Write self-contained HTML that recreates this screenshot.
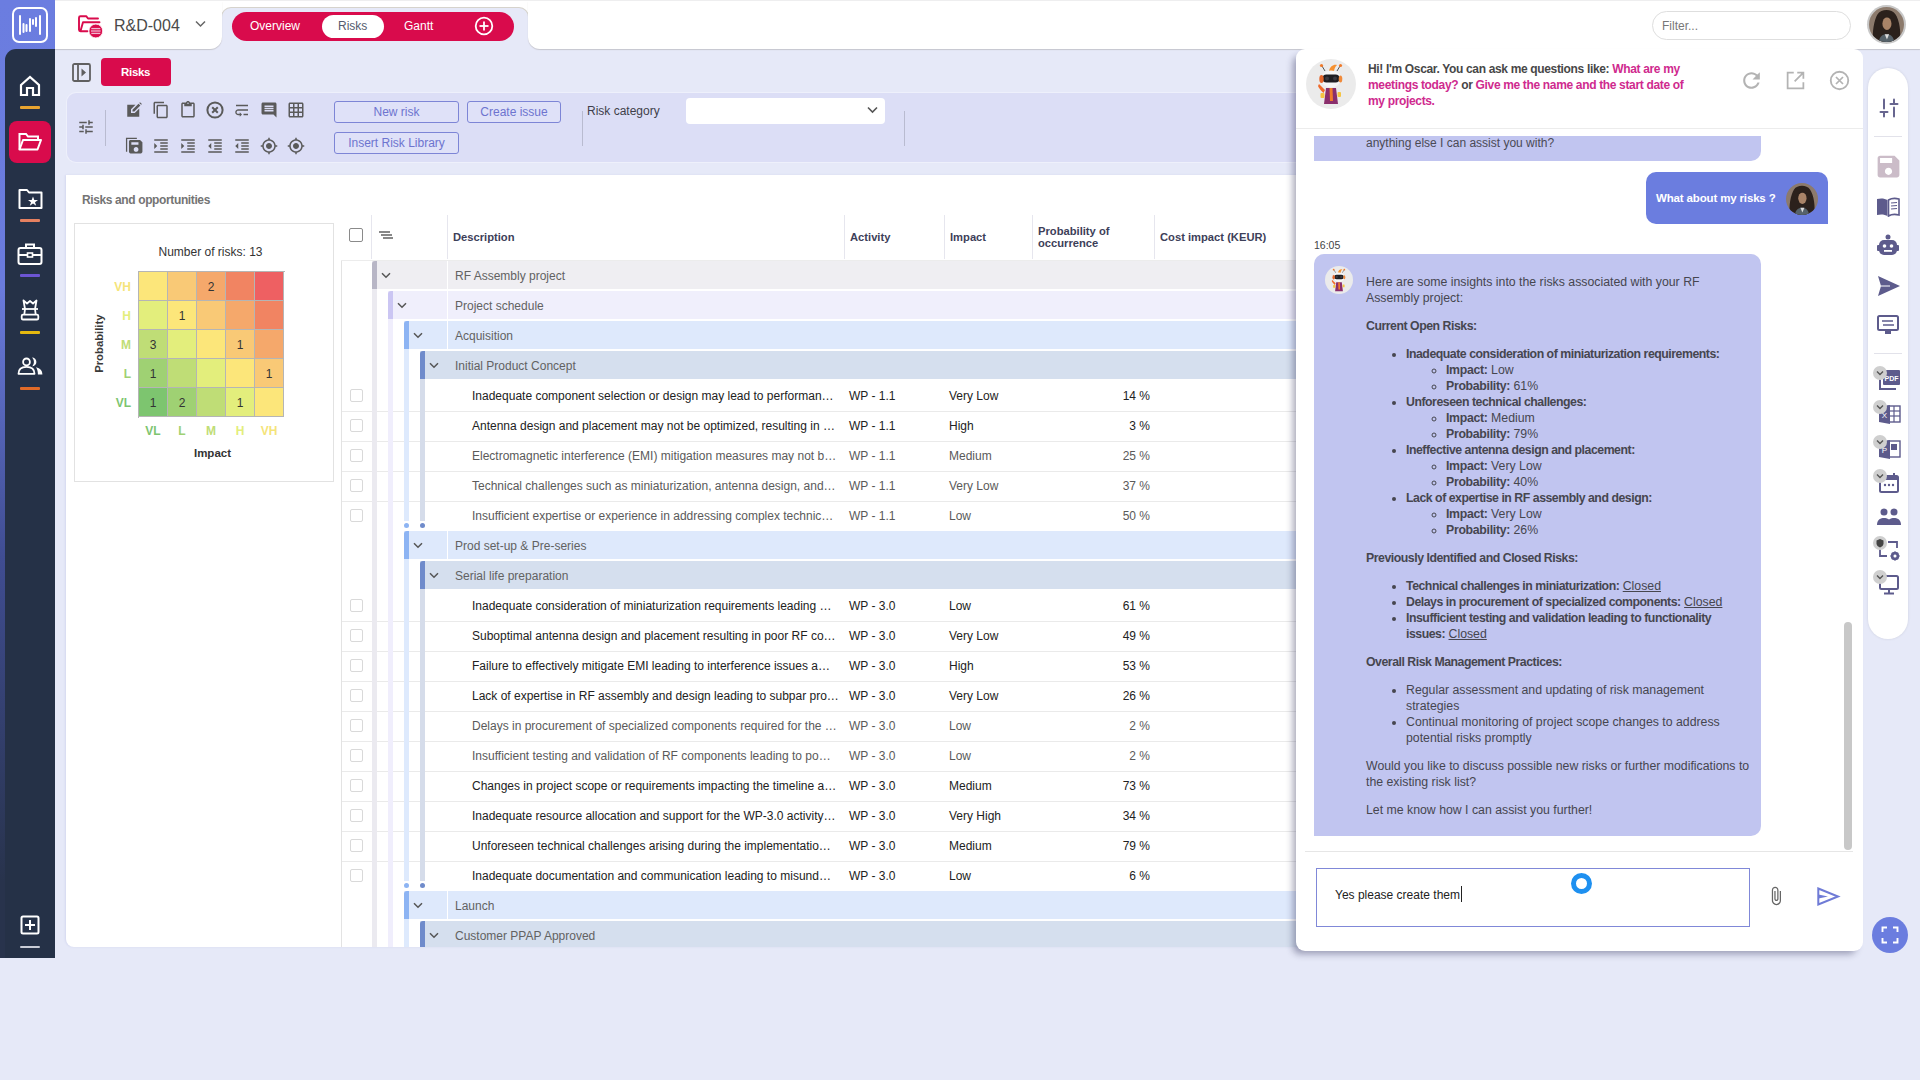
<!DOCTYPE html><html><head><meta charset="utf-8"><title>Risks</title><style>
*{box-sizing:border-box;margin:0;padding:0}
html,body{width:1920px;height:1080px;overflow:hidden}
body{font-family:"Liberation Sans", sans-serif;background:#e6e9f8;position:relative;color:#333}
.abs{position:absolute}
.t{position:absolute;white-space:nowrap;line-height:1}
svg{display:block}
</style></head><body>
<div class="abs" style="left:0;top:0;width:55px;height:958px;background:linear-gradient(#6b7de0 0%,#6a7bdc 30%,#404d92 58%,#28334c 92%)"></div>
<div class="abs" style="left:5px;top:49px;width:50px;height:909px;background:#253147;border-top-left-radius:11px"></div>
<div class="abs" style="left:12px;top:7px;width:36px;height:36px;border:2px solid #fff;border-radius:7px"></div>
<svg class="abs" style="left:12px;top:7px" width="36" height="36" viewBox="0 0 36 36"><g stroke="#fff" stroke-width="2" stroke-linecap="round">
<line x1="8" y1="9" x2="8" y2="27"/><line x1="11.5" y1="17" x2="11.5" y2="25"/><line x1="14.5" y1="18" x2="14.5" y2="24"/><line x1="18" y1="12" x2="18" y2="24"/><line x1="21" y1="13" x2="21" y2="17"/><line x1="24" y1="11" x2="24" y2="19"/><line x1="28" y1="9" x2="28" y2="27"/></g></svg>
<svg class="abs" style="left:18px;top:74px" width="24" height="24" viewBox="0 0 24 24"><path d="M3 11 L12 3 L21 11 V21 H15 V14 H9 V21 H3 Z" fill="none" stroke="#fff" stroke-width="2.2" stroke-linejoin="miter"/></svg>
<div class="abs" style="left:20px;top:106px;width:20px;height:3px;background:#e8a430;border-radius:1px"></div>
<div class="abs" style="left:9px;top:121px;width:42px;height:42px;background:#d90b4c;border-radius:8px"></div>
<svg class="abs" style="left:18px;top:132px" width="24" height="20" viewBox="0 0 24 20"><path d="M1.5 17.5 V2 H8 L10 4.5 H20 V7.5" fill="none" stroke="#fff" stroke-width="2"/><path d="M1.5 17.5 L5 8 H23 L19.5 17.5 Z" fill="none" stroke="#fff" stroke-width="2" stroke-linejoin="round"/></svg>
<svg class="abs" style="left:18px;top:188px" width="25" height="22" viewBox="0 0 25 22"><path d="M1.5 20 V2 H9 L11 4.5 H23.5 V20 Z" fill="none" stroke="#fff" stroke-width="2" stroke-linejoin="round"/><path d="M15 8.5 L16.3 12 H20 L17 14.2 L18.2 17.8 L15 15.6 L11.8 17.8 L13 14.2 L10 12 H13.7 Z" fill="#fff"/></svg>
<div class="abs" style="left:20px;top:219px;width:20px;height:3px;background:#e58060;border-radius:1px"></div>
<svg class="abs" style="left:17px;top:242px" width="26" height="24" viewBox="0 0 26 24"><rect x="1.5" y="6" width="23" height="16" rx="2" fill="none" stroke="#fff" stroke-width="2"/><path d="M9 6 V2.5 H17 V6" fill="none" stroke="#fff" stroke-width="2"/><line x1="1.5" y1="13" x2="24.5" y2="13" stroke="#fff" stroke-width="2"/><rect x="10.5" y="11" width="5" height="4" fill="#253147" stroke="#fff" stroke-width="1.6"/></svg>
<div class="abs" style="left:20px;top:274px;width:20px;height:3px;background:#6c55d4;border-radius:1px"></div>
<svg class="abs" style="left:14px;top:290px" width="32" height="90" viewBox="14 290 32 90"><g fill="none" stroke="#fff" stroke-width="1.8" stroke-linejoin="round">
<path d="M25 309 L23.5 300.5 L27 303.5 L30 301 L33 303.5 L36.5 300.5 L35 309"/>
<line x1="22" y1="309" x2="38" y2="309"/>
<path d="M25 309 L24.3 314.5 M35 309 L35.7 314.5"/>
<rect x="21.7" y="314.7" width="16.6" height="4.8" rx="1.3"/>
<circle cx="26.5" cy="361.9" r="3.4"/>
<path d="M18.5 373.8 C18.5 368.8 22 366.9 26.5 366.9 C31 366.9 34.5 368.8 34.5 373.8 Z"/></g>
<path d="M32 357.5 A4.4 4.4 0 0 1 32 366.3 C33.3 365 33.9 363.4 33.9 361.9 C33.9 360.4 33.3 358.8 32 357.5 Z" fill="#fff"/>
<path d="M36 367.3 C40.2 368.2 42.4 370.6 42.4 374.6 H37.9 C37.9 371.4 37.3 369.2 36 367.3 Z" fill="#fff"/>
</svg>
<div class="abs" style="left:20px;top:331px;width:20px;height:3px;background:#e5b80f;border-radius:1px"></div>
<div class="abs" style="left:20px;top:386.5px;width:20px;height:3px;background:#e06a28;border-radius:1px"></div>
<svg class="abs" style="left:20px;top:915px" width="20" height="20" viewBox="0 0 20 20"><rect x="1.5" y="1.5" width="17" height="17" rx="1.5" fill="none" stroke="#fff" stroke-width="2"/><line x1="10" y1="5" x2="10" y2="15" stroke="#fff" stroke-width="2"/><line x1="5" y1="10" x2="15" y2="10" stroke="#fff" stroke-width="2"/></svg>
<div class="abs" style="left:20px;top:946px;width:20px;height:2px;background:#c9ccd6;border-radius:1px"></div>
<div class="abs" style="left:55px;top:0;width:1865px;height:2px;background:#eeeeef"></div>
<div class="abs" style="left:215px;top:1px;width:320px;height:25px;background:#fff"></div>
<div class="abs" style="left:221px;top:7px;width:308px;height:43px;background:#e6e9f8;border-top-left-radius:10px;border-top-right-radius:10px;border:1px solid #d6d3cc;border-bottom:none"></div>
<div class="abs" style="left:215px;top:39px;width:320px;height:11px;background:#e6e9f8"></div>
<div class="abs" style="left:55px;top:1px;width:167px;height:48px;background:#fff;border-bottom-right-radius:12px;box-shadow:0 1px 1px rgba(70,60,40,.2)"></div>
<div class="abs" style="left:528px;top:1px;width:1392px;height:48px;background:#fff;border-bottom-left-radius:12px;box-shadow:0 1px 1px rgba(70,60,40,.2)"></div>
<svg class="abs" style="left:72px;top:8px" width="36" height="34" viewBox="0 0 36 34"><g fill="none" stroke="#d90b4c" stroke-width="1.9" stroke-linejoin="round" stroke-linecap="round"><path d="M15.5 23.2 H8.5 Q7 23.2 7 21.7 V9.7 Q7 8.2 8.5 8.2 H14.2 L16 10.5 H26"/><path d="M8.5 23 L11 14.3 H27.5"/></g><circle cx="23.8" cy="23" r="6.9" fill="#d90b4c" stroke="#fff" stroke-width="0.8"/><g stroke="#f2b6cf" stroke-width="1.3"><line x1="19.3" y1="20.6" x2="28.3" y2="20.6"/><line x1="19" y1="23" x2="28.6" y2="23"/><line x1="19.3" y1="25.4" x2="28.3" y2="25.4"/></g></svg>
<div class="t" style="left:114px;top:18px;font-size:16px;color:#4a4a4a">R&amp;D-004</div>
<svg class="abs" style="left:195px;top:20px" width="11" height="8" viewBox="0 0 11 8"><path d="M1 1.5 L5.5 6 L10 1.5" fill="none" stroke="#666" stroke-width="1.5"/></svg>
<div class="abs" style="left:232px;top:12px;width:282px;height:29px;background:#d90b4c;border-radius:15px"></div>
<div class="abs" style="left:322px;top:15px;width:62px;height:23px;background:#fff;border-radius:12px"></div>
<div class="t" style="left:250px;top:20px;font-size:12px;color:#fff">Overview</div>
<div class="t" style="left:338px;top:20px;font-size:12px;color:#555b6e">Risks</div>
<div class="t" style="left:404px;top:20px;font-size:12px;color:#fff">Gantt</div>
<svg class="abs" style="left:474px;top:16px" width="20" height="20" viewBox="0 0 20 20"><circle cx="10" cy="10" r="8.3" fill="none" stroke="#fff" stroke-width="1.8"/><line x1="10" y1="5.5" x2="10" y2="14.5" stroke="#fff" stroke-width="1.8"/><line x1="5.5" y1="10" x2="14.5" y2="10" stroke="#fff" stroke-width="1.8"/></svg>
<div class="abs" style="left:1652px;top:11px;width:199px;height:29px;border:1.5px solid #dedede;border-radius:15px;background:#fff"></div>
<div class="t" style="left:1662px;top:20px;font-size:12px;color:#777">Filter...</div>
<div class="abs" style="left:1867px;top:5px;width:39px;height:39px;border-radius:50%;background:#c8c8c8"></div>
<svg class="abs" style="left:1869.0px;top:7.0px" width="35.0" height="35.0" viewBox="0 0 40 40"><defs><clipPath id="cp188624"><circle cx="20" cy="20" r="20"/></clipPath></defs><g clip-path="url(#cp188624)"><rect width="40" height="40" fill="#8c7a6c"/>
<path d="M5 40 C3 30 6 14 10 8 C14 2 26 2 30 8 C35 15 37 30 35 40 Z" fill="#2b211c"/>
<ellipse cx="20.5" cy="19" rx="5.2" ry="7.2" fill="#a98468"/>
<path d="M14 14 C15 9 25 9 27 14 C24 11 17 11 14 14 Z" fill="#2b211c"/>
<path d="M11 40 C12 34 15 31 20 31 C25 31 28 34 29 40 Z" fill="#56626a"/>
<path d="M18 31 L20.5 37 L23 31 Z" fill="#dcdcdc"/></g></svg>
<svg class="abs" style="left:72px;top:63px" width="19" height="19" viewBox="0 0 19 19"><rect x="1" y="1" width="17" height="17" rx="1.5" fill="none" stroke="#606060" stroke-width="1.8"/><line x1="6" y1="1" x2="6" y2="18" stroke="#606060" stroke-width="1.8"/><path d="M9.5 5.5 L14 9.5 L9.5 13.5 Z" fill="#606060"/></svg>
<div class="abs" style="left:101px;top:58px;width:70px;height:28px;background:#d90b4c;border-radius:4px"></div>
<div class="t" style="left:121px;top:67px;font-size:11.5px;font-weight:bold;letter-spacing:-0.3px;color:#fff">Risks</div>
<div class="abs" style="left:67px;top:92.5px;width:1240px;height:69px;background:#dcdef6;border-radius:9px;box-shadow:0 0 0 1px #eef0fb"></div>
<svg class="abs" style="left:77.0px;top:118.0px" width="18" height="18" viewBox="0 0 24 24"><path d="M3 17v2h6v-2H3zM3 5v2h10V5H3zm10 16v-2h8v-2h-8v-2h-2v6h2zM7 9v2H3v2h4v2h2V9H7zm14 4v-2H11v2h10zm-6-4h2V7h4V5h-4V3h-2v6z" fill="#5a5a5a"/></svg>
<div class="abs" style="left:105px;top:110px;width:1px;height:36px;background:#b9bbd0"></div>
<svg class="abs" style="left:125.4px;top:101.0px" width="18" height="18" viewBox="0 0 24 24"><path d="M3 5h11l-6 6v5h5l6-6v11H3z M10 14v-2.5l8-8 2.5 2.5-8 8z M19 2.5l1-1 2.5 2.5-1 1z" fill="#5a5a5a"/></svg>
<svg class="abs" style="left:151.6px;top:101.0px" width="18" height="18" viewBox="0 0 24 24"><path d="M16 1H4c-1.1 0-2 .9-2 2v14h2V3h12V1zm3 4H8c-1.1 0-2 .9-2 2v14c0 1.1.9 2 2 2h11c1.1 0 2-.9 2-2V7c0-1.1-.9-2-2-2zm0 16H8V7h11v14z" fill="#5a5a5a"/></svg>
<svg class="abs" style="left:179.0px;top:101.0px" width="18" height="18" viewBox="0 0 24 24"><path d="M19 2h-4.18C14.4.84 13.3 0 12 0c-1.3 0-2.4.84-2.82 2H5c-1.1 0-2 .9-2 2v16c0 1.1.9 2 2 2h14c1.1 0 2-.9 2-2V4c0-1.1-.9-2-2-2zm-7 0c.55 0 1 .45 1 1s-.45 1-1 1-1-.45-1-1 .45-1 1-1zm7 18H5V4h2v3h10V4h2v16z" fill="#5a5a5a"/></svg>
<svg class="abs" style="left:205.9px;top:101px" width="18" height="18" viewBox="0 0 18 18"><circle cx="9" cy="9" r="7.6" fill="none" stroke="#5a5a5a" stroke-width="2"/><path d="M6.2 6.2 L11.8 11.8 M11.8 6.2 L6.2 11.8" stroke="#5a5a5a" stroke-width="2"/></svg>
<svg class="abs" style="left:232.6px;top:101px" width="18" height="18" viewBox="0 0 24 24"><g transform="translate(24,0) scale(-1,1)"><path d="M4 19h6v-2H4v2zM20 5H4v2h16V5zm-3 6H4v2h13.25c1.1 0 2 .9 2 2s-.9 2-2 2H15v-2l-3 3 3 3v-2h2c2.21 0 4-1.79 4-4s-1.79-4-4-4z" fill="#5a5a5a"/></g></svg>
<svg class="abs" style="left:259.8px;top:101.0px" width="18" height="18" viewBox="0 0 24 24"><path d="M21.99 4c0-1.1-.89-2-1.99-2H4c-1.1 0-2 .9-2 2v12c0 1.1.9 2 2 2h14l4 4-.01-18zM18 14H6v-2h12v2zm0-3H6V9h12v2zm0-3H6V6h12v2z" fill="#5a5a5a"/></svg>
<svg class="abs" style="left:286.8px;top:101.0px" width="18" height="18" viewBox="0 0 24 24"><path d="M20 2H4c-1.1 0-2 .9-2 2v16c0 1.1.9 2 2 2h16c1.1 0 2-.9 2-2V4c0-1.1-.9-2-2-2zM8 20H4v-4h4v4zm0-6H4v-4h4v4zm0-6H4V4h4v4zm6 12h-4v-4h4v4zm0-6h-4v-4h4v4zm0-6h-4V4h4v4zm6 12h-4v-4h4v4zm0-6h-4v-4h4v4zm0-6h-4V4h4v4z" fill="#5a5a5a"/></svg>
<svg class="abs" style="left:124.9px;top:136px" width="19" height="19" viewBox="0 0 24 24"><path d="M2 20 V3 H15" fill="none" stroke="#5a5a5a" stroke-width="1.6"/><path d="M19 5H7c-1.11 0-2 .9-2 2v13c0 1.1.89 2 2 2h13c1.1 0 2-.9 2-2V8l-3-3zm-5 15c-1.66 0-3-1.34-3-3s1.34-3 3-3 3 1.34 3 3-1.34 3-3 3zm3-9H8V8h9v3z" fill="#5a5a5a"/></svg>
<svg class="abs" style="left:151.6px;top:136.5px" width="18" height="18" viewBox="0 0 24 24"><path d="M3 21h18v-2H3v2zM3 8v8l4-4-4-4zm8 9h10v-2H11v2zM3 3v2h18V3H3zm8 6h10V7H11v2zm0 4h10v-2H11v2z" fill="#5a5a5a"/></svg>
<svg class="abs" style="left:179.0px;top:136.5px" width="18" height="18" viewBox="0 0 24 24"><path d="M3 21h18v-2H3v2zM3 8v8l4-4-4-4zm8 9h10v-2H11v2zM3 3v2h18V3H3zm8 6h10V7H11v2zm0 4h10v-2H11v2z" fill="#5a5a5a"/></svg>
<svg class="abs" style="left:205.9px;top:136.5px" width="18" height="18" viewBox="0 0 24 24"><path d="M11 17h10v-2H11v2zm-8-5l4 4V8l-4 4zm0 9h18v-2H3v2zM3 3v2h18V3H3zm8 6h10V7H11v2zm0 4h10v-2H11v2z" fill="#5a5a5a"/></svg>
<svg class="abs" style="left:232.6px;top:136.5px" width="18" height="18" viewBox="0 0 24 24"><path d="M11 17h10v-2H11v2zm-8-5l4 4V8l-4 4zm0 9h18v-2H3v2zM3 3v2h18V3H3zm8 6h10V7H11v2zm0 4h10v-2H11v2z" fill="#5a5a5a"/></svg>
<svg class="abs" style="left:259.8px;top:136.5px" width="18" height="18" viewBox="0 0 24 24"><path d="M12 8c-2.21 0-4 1.79-4 4s1.79 4 4 4 4-1.79 4-4-1.79-4-4-4zm8.94 3c-.46-4.17-3.77-7.48-7.94-7.94V1h-2v2.06C6.83 3.52 3.52 6.83 3.06 11H1v2h2.06c.46 4.17 3.77 7.48 7.94 7.94V23h2v-2.06c4.17-.46 7.48-3.77 7.94-7.94H23v-2h-2.06zM12 19c-3.87 0-7-3.13-7-7s3.13-7 7-7 7 3.13 7 7-3.13 7-7 7z" fill="#5a5a5a"/></svg>
<svg class="abs" style="left:286.8px;top:136.5px" width="18" height="18" viewBox="0 0 24 24"><path d="M12 8c-2.21 0-4 1.79-4 4s1.79 4 4 4 4-1.79 4-4-1.79-4-4-4zm8.94 3c-.46-4.17-3.77-7.48-7.94-7.94V1h-2v2.06C6.83 3.52 3.52 6.83 3.06 11H1v2h2.06c.46 4.17 3.77 7.48 7.94 7.94V23h2v-2.06c4.17-.46 7.48-3.77 7.94-7.94H23v-2h-2.06zM12 19c-3.87 0-7-3.13-7-7s3.13-7 7-7 7 3.13 7 7-3.13 7-7 7z" fill="#5a5a5a"/></svg>
<div class="abs" style="left:334px;top:101px;width:125px;height:22px;border:1.3px solid #7d85d6;border-radius:3px;background:#dfe1f8"></div>
<div class="t" style="left:334px;top:106.3px;width:125px;text-align:center;font-size:12px;color:#6d74cf">New risk</div>
<div class="abs" style="left:467px;top:101px;width:94px;height:22px;border:1.3px solid #7d85d6;border-radius:3px;background:#dfe1f8"></div>
<div class="t" style="left:467px;top:106.3px;width:94px;text-align:center;font-size:12px;color:#6d74cf">Create issue</div>
<div class="abs" style="left:334px;top:132px;width:125px;height:22px;border:1.3px solid #7d85d6;border-radius:3px;background:#dfe1f8"></div>
<div class="t" style="left:334px;top:137.3px;width:125px;text-align:center;font-size:12px;color:#6d74cf">Insert Risk Library</div>
<div class="abs" style="left:582px;top:111px;width:1px;height:35px;background:#b9bbd0"></div>
<div class="t" style="left:587px;top:105px;font-size:12px;color:#3f3f4a">Risk category</div>
<div class="abs" style="left:686px;top:98px;width:199px;height:26px;background:#fff;border-radius:4px"></div>
<svg class="abs" style="left:867px;top:106px" width="11" height="8" viewBox="0 0 11 8"><path d="M1 1.5 L5.5 6 L10 1.5" fill="none" stroke="#555" stroke-width="1.6"/></svg>
<div class="abs" style="left:904px;top:111px;width:1px;height:35px;background:#b9bbd0"></div>
<div class="abs" style="left:66px;top:174.5px;width:1300px;height:772.5px;background:#fff;border-radius:0 0 0 8px;box-shadow:-1px 0 2px rgba(120,130,200,.15)"></div>
<div class="t" style="left:82px;top:194px;font-size:12px;font-weight:bold;letter-spacing:-0.38px;color:#747474">Risks and opportunities</div>
<div class="abs" style="left:74px;top:223px;width:260px;height:259px;border:1px solid #e2e2e2"></div>
<div class="t" style="left:74px;top:246px;width:273px;text-align:center;font-size:12px;color:#333">Number of risks: 13</div>
<div class="abs" style="left:138.5px;top:271.5px;width:29px;height:29px;background:#fce67a;border-right:1px solid #b5b5b5;border-bottom:1px solid #b5b5b5"></div>
<div class="abs" style="left:167.5px;top:271.5px;width:29px;height:29px;background:#f9c976;border-right:1px solid #b5b5b5;border-bottom:1px solid #b5b5b5"></div>
<div class="abs" style="left:196.5px;top:271.5px;width:29px;height:29px;background:#f5a86b;border-right:1px solid #b5b5b5;border-bottom:1px solid #b5b5b5"></div>
<div class="t" style="left:196.5px;top:280.5px;width:29px;text-align:center;font-size:12px;color:#333">2</div>
<div class="abs" style="left:225.5px;top:271.5px;width:29px;height:29px;background:#f18462;border-right:1px solid #b5b5b5;border-bottom:1px solid #b5b5b5"></div>
<div class="abs" style="left:254.5px;top:271.5px;width:29px;height:29px;background:#ee6062;border-right:1px solid #b5b5b5;border-bottom:1px solid #b5b5b5"></div>
<div class="abs" style="left:138.5px;top:300.5px;width:29px;height:29px;background:#e3ee7c;border-right:1px solid #b5b5b5;border-bottom:1px solid #b5b5b5"></div>
<div class="abs" style="left:167.5px;top:300.5px;width:29px;height:29px;background:#fce67a;border-right:1px solid #b5b5b5;border-bottom:1px solid #b5b5b5"></div>
<div class="t" style="left:167.5px;top:309.5px;width:29px;text-align:center;font-size:12px;color:#333">1</div>
<div class="abs" style="left:196.5px;top:300.5px;width:29px;height:29px;background:#f9c976;border-right:1px solid #b5b5b5;border-bottom:1px solid #b5b5b5"></div>
<div class="abs" style="left:225.5px;top:300.5px;width:29px;height:29px;background:#f5a86b;border-right:1px solid #b5b5b5;border-bottom:1px solid #b5b5b5"></div>
<div class="abs" style="left:254.5px;top:300.5px;width:29px;height:29px;background:#f18462;border-right:1px solid #b5b5b5;border-bottom:1px solid #b5b5b5"></div>
<div class="abs" style="left:138.5px;top:329.5px;width:29px;height:29px;background:#bfdd76;border-right:1px solid #b5b5b5;border-bottom:1px solid #b5b5b5"></div>
<div class="t" style="left:138.5px;top:338.5px;width:29px;text-align:center;font-size:12px;color:#333">3</div>
<div class="abs" style="left:167.5px;top:329.5px;width:29px;height:29px;background:#e3ee7c;border-right:1px solid #b5b5b5;border-bottom:1px solid #b5b5b5"></div>
<div class="abs" style="left:196.5px;top:329.5px;width:29px;height:29px;background:#fce67a;border-right:1px solid #b5b5b5;border-bottom:1px solid #b5b5b5"></div>
<div class="abs" style="left:225.5px;top:329.5px;width:29px;height:29px;background:#f9c976;border-right:1px solid #b5b5b5;border-bottom:1px solid #b5b5b5"></div>
<div class="t" style="left:225.5px;top:338.5px;width:29px;text-align:center;font-size:12px;color:#333">1</div>
<div class="abs" style="left:254.5px;top:329.5px;width:29px;height:29px;background:#f5a86b;border-right:1px solid #b5b5b5;border-bottom:1px solid #b5b5b5"></div>
<div class="abs" style="left:138.5px;top:358.5px;width:29px;height:29px;background:#9fd173;border-right:1px solid #b5b5b5;border-bottom:1px solid #b5b5b5"></div>
<div class="t" style="left:138.5px;top:367.5px;width:29px;text-align:center;font-size:12px;color:#333">1</div>
<div class="abs" style="left:167.5px;top:358.5px;width:29px;height:29px;background:#bfdd76;border-right:1px solid #b5b5b5;border-bottom:1px solid #b5b5b5"></div>
<div class="abs" style="left:196.5px;top:358.5px;width:29px;height:29px;background:#e3ee7c;border-right:1px solid #b5b5b5;border-bottom:1px solid #b5b5b5"></div>
<div class="abs" style="left:225.5px;top:358.5px;width:29px;height:29px;background:#fce67a;border-right:1px solid #b5b5b5;border-bottom:1px solid #b5b5b5"></div>
<div class="abs" style="left:254.5px;top:358.5px;width:29px;height:29px;background:#f9c976;border-right:1px solid #b5b5b5;border-bottom:1px solid #b5b5b5"></div>
<div class="t" style="left:254.5px;top:367.5px;width:29px;text-align:center;font-size:12px;color:#333">1</div>
<div class="abs" style="left:138.5px;top:387.5px;width:29px;height:29px;background:#7dc56f;border-right:1px solid #b5b5b5;border-bottom:1px solid #b5b5b5"></div>
<div class="t" style="left:138.5px;top:396.5px;width:29px;text-align:center;font-size:12px;color:#333">1</div>
<div class="abs" style="left:167.5px;top:387.5px;width:29px;height:29px;background:#9fd173;border-right:1px solid #b5b5b5;border-bottom:1px solid #b5b5b5"></div>
<div class="t" style="left:167.5px;top:396.5px;width:29px;text-align:center;font-size:12px;color:#333">2</div>
<div class="abs" style="left:196.5px;top:387.5px;width:29px;height:29px;background:#bfdd76;border-right:1px solid #b5b5b5;border-bottom:1px solid #b5b5b5"></div>
<div class="abs" style="left:225.5px;top:387.5px;width:29px;height:29px;background:#e3ee7c;border-right:1px solid #b5b5b5;border-bottom:1px solid #b5b5b5"></div>
<div class="t" style="left:225.5px;top:396.5px;width:29px;text-align:center;font-size:12px;color:#333">1</div>
<div class="abs" style="left:254.5px;top:387.5px;width:29px;height:29px;background:#fce67a;border-right:1px solid #b5b5b5;border-bottom:1px solid #b5b5b5"></div>
<div class="abs" style="left:137.5px;top:270.5px;width:147px;height:147px;border-left:1px solid #b5b5b5;border-top:1px solid #b5b5b5"></div>
<div class="t" style="left:100px;top:280.5px;width:31px;text-align:right;font-size:12px;font-weight:bold;color:#f5e47a">VH</div>
<div class="t" style="left:100px;top:309.5px;width:31px;text-align:right;font-size:12px;font-weight:bold;color:#e3ee7c">H</div>
<div class="t" style="left:100px;top:338.5px;width:31px;text-align:right;font-size:12px;font-weight:bold;color:#bfdd76">M</div>
<div class="t" style="left:100px;top:367.5px;width:31px;text-align:right;font-size:12px;font-weight:bold;color:#9fd173">L</div>
<div class="t" style="left:100px;top:396.5px;width:31px;text-align:right;font-size:12px;font-weight:bold;color:#7dc56f">VL</div>
<div class="t" style="left:138.5px;top:425px;width:29px;text-align:center;font-size:12px;font-weight:bold;color:#7dc56f">VL</div>
<div class="t" style="left:167.5px;top:425px;width:29px;text-align:center;font-size:12px;font-weight:bold;color:#9fd173">L</div>
<div class="t" style="left:196.5px;top:425px;width:29px;text-align:center;font-size:12px;font-weight:bold;color:#bfdd76">M</div>
<div class="t" style="left:225.5px;top:425px;width:29px;text-align:center;font-size:12px;font-weight:bold;color:#e3ee7c">H</div>
<div class="t" style="left:254.5px;top:425px;width:29px;text-align:center;font-size:12px;font-weight:bold;color:#f5e47a">VH</div>
<div class="t" style="left:140px;top:448px;width:145px;text-align:center;font-size:11.5px;font-weight:bold;color:#333">Impact</div>
<div class="t" style="left:60px;top:338px;width:80px;text-align:center;font-size:11.3px;font-weight:bold;color:#3a3a3a;transform:rotate(-90deg)">Probability</div>
<div class="abs" style="left:341px;top:260px;width:1px;height:687px;background:#e3e3e3"></div>
<div class="abs" style="left:341px;top:260px;width:1000px;height:1px;background:#ececec"></div>
<div class="abs" style="left:371px;top:215px;width:1px;height:44px;background:#e6e6ee"></div>
<div class="abs" style="left:447px;top:215px;width:1px;height:44px;background:#e6e6ee"></div>
<div class="abs" style="left:844px;top:215px;width:1px;height:44px;background:#e6e6ee"></div>
<div class="abs" style="left:944px;top:215px;width:1px;height:44px;background:#e6e6ee"></div>
<div class="abs" style="left:1032px;top:215px;width:1px;height:44px;background:#e6e6ee"></div>
<div class="abs" style="left:1154px;top:215px;width:1px;height:44px;background:#e6e6ee"></div>
<div class="abs" style="left:349px;top:228px;width:14px;height:14px;border:1.5px solid #8a8a8a;border-radius:2px"></div>
<svg class="abs" style="left:378px;top:230px" width="16" height="12" viewBox="0 0 16 12"><g stroke="#555" stroke-width="1.4"><line x1="1" y1="2" x2="12" y2="2"/><line x1="3" y1="5" x2="14" y2="5"/><line x1="5" y1="8" x2="15" y2="8"/></g></svg>
<div class="t" style="left:453px;top:232px;font-size:11.2px;font-weight:bold;color:#3d4059">Description</div>
<div class="t" style="left:850px;top:232px;font-size:11.2px;font-weight:bold;color:#3d4059">Activity</div>
<div class="t" style="left:950px;top:232px;font-size:11.2px;font-weight:bold;color:#3d4059">Impact</div>
<div class="t" style="left:1160px;top:232px;font-size:11.2px;font-weight:bold;color:#3d4059">Cost impact (KEUR)</div>
<div class="t" style="left:1038px;top:225px;font-size:11.2px;font-weight:bold;color:#3d4059;line-height:12px;white-space:normal;width:110px">Probability of<br>occurrence</div>
<div class="abs" style="left:0;top:0;width:1920px;height:947px;overflow:hidden;pointer-events:none"><div class="abs" style="left:342px;top:410.5px;width:1000px;height:1px;background:#eaeaea"></div><div class="abs" style="left:342px;top:440.5px;width:1000px;height:1px;background:#eaeaea"></div><div class="abs" style="left:342px;top:470.5px;width:1000px;height:1px;background:#eaeaea"></div><div class="abs" style="left:342px;top:500.5px;width:1000px;height:1px;background:#eaeaea"></div><div class="abs" style="left:342px;top:620.5px;width:1000px;height:1px;background:#eaeaea"></div><div class="abs" style="left:342px;top:650.5px;width:1000px;height:1px;background:#eaeaea"></div><div class="abs" style="left:342px;top:680.5px;width:1000px;height:1px;background:#eaeaea"></div><div class="abs" style="left:342px;top:710.5px;width:1000px;height:1px;background:#eaeaea"></div><div class="abs" style="left:342px;top:740.5px;width:1000px;height:1px;background:#eaeaea"></div><div class="abs" style="left:342px;top:770.5px;width:1000px;height:1px;background:#eaeaea"></div><div class="abs" style="left:342px;top:800.5px;width:1000px;height:1px;background:#eaeaea"></div><div class="abs" style="left:342px;top:830.5px;width:1000px;height:1px;background:#eaeaea"></div><div class="abs" style="left:342px;top:860.5px;width:1000px;height:1px;background:#eaeaea"></div><div class="abs" style="left:372px;top:288px;width:5px;height:659px;background:#ebeaf0"></div><div class="abs" style="left:388px;top:318px;width:5px;height:629px;background:#f0eefc"></div><div class="abs" style="left:404px;top:348px;width:5px;height:173px;background:#deeafd"></div><div class="abs" style="left:404px;top:523px;width:5px;height:5px;border-radius:50%;background:#8db4f3"></div><div class="abs" style="left:420px;top:378px;width:5px;height:143px;background:#d5dcea"></div><div class="abs" style="left:420px;top:523px;width:5px;height:5px;border-radius:50%;background:#6f8bcb"></div><div class="abs" style="left:404px;top:558px;width:5px;height:323px;background:#deeafd"></div><div class="abs" style="left:404px;top:883px;width:5px;height:5px;border-radius:50%;background:#8db4f3"></div><div class="abs" style="left:420px;top:588px;width:5px;height:293px;background:#d5dcea"></div><div class="abs" style="left:420px;top:883px;width:5px;height:5px;border-radius:50%;background:#6f8bcb"></div><div class="abs" style="left:404px;top:918px;width:5px;height:29px;background:#deeafd"></div><div class="abs" style="left:420px;top:948px;width:5px;height:-1px;background:#d5dcea"></div><div class="abs" style="left:372px;top:260.6px;width:1000px;height:28.3px;background:#efeef2"></div><div class="abs" style="left:372px;top:260.6px;width:5px;height:28.3px;background:#b8b6c6;border-top-left-radius:3px"></div><div class="abs" style="left:447px;top:260.6px;width:1px;height:28.3px;background:#fff"></div><svg class="abs" style="left:381px;top:272px" width="10" height="7" viewBox="0 0 10 7"><path d="M1 1.2 L5 5.2 L9 1.2" fill="none" stroke="#555" stroke-width="1.5"/></svg><div class="t" style="left:455px;top:270px;font-size:12px;color:#626262">RF Assembly project</div><div class="abs" style="left:388px;top:291.3px;width:1000px;height:27.6px;background:#f0effc"></div><div class="abs" style="left:388px;top:291.3px;width:5px;height:27.6px;background:#cbc6f3;border-top-left-radius:3px"></div><div class="abs" style="left:447px;top:291.3px;width:1px;height:27.6px;background:#fff"></div><svg class="abs" style="left:397px;top:302px" width="10" height="7" viewBox="0 0 10 7"><path d="M1 1.2 L5 5.2 L9 1.2" fill="none" stroke="#555" stroke-width="1.5"/></svg><div class="t" style="left:455px;top:300px;font-size:12px;color:#626262">Project schedule</div><div class="abs" style="left:404px;top:321.3px;width:1000px;height:27.6px;background:#dee9fc"></div><div class="abs" style="left:404px;top:321.3px;width:5px;height:27.6px;background:#8db4f3;border-top-left-radius:3px"></div><div class="abs" style="left:447px;top:321.3px;width:1px;height:27.6px;background:#fff"></div><svg class="abs" style="left:413px;top:332px" width="10" height="7" viewBox="0 0 10 7"><path d="M1 1.2 L5 5.2 L9 1.2" fill="none" stroke="#555" stroke-width="1.5"/></svg><div class="t" style="left:455px;top:330px;font-size:12px;color:#626262">Acquisition</div><div class="abs" style="left:420px;top:351.3px;width:1000px;height:27.6px;background:#d5dfee"></div><div class="abs" style="left:420px;top:351.3px;width:5px;height:27.6px;background:#6f8bcb;border-top-left-radius:3px"></div><svg class="abs" style="left:429px;top:362px" width="10" height="7" viewBox="0 0 10 7"><path d="M1 1.2 L5 5.2 L9 1.2" fill="none" stroke="#555" stroke-width="1.5"/></svg><div class="t" style="left:455px;top:360px;font-size:12px;color:#626262">Initial Product Concept</div><div class="abs" style="left:350px;top:389px;width:13px;height:13px;border:1.3px solid #d9d9d9;border-radius:2px"></div><div class="t" style="left:472px;top:390px;font-size:12px;color:#222">Inadequate component selection or design may lead to performan…</div><div class="t" style="left:849px;top:390px;font-size:12px;color:#222">WP - 1.1</div><div class="t" style="left:949px;top:390px;font-size:12px;color:#222">Very Low</div><div class="t" style="left:1050px;top:390px;width:100px;text-align:right;font-size:12px;color:#222">14 %</div><div class="abs" style="left:350px;top:419px;width:13px;height:13px;border:1.3px solid #d9d9d9;border-radius:2px"></div><div class="t" style="left:472px;top:420px;font-size:12px;color:#222">Antenna design and placement may not be optimized, resulting in …</div><div class="t" style="left:849px;top:420px;font-size:12px;color:#222">WP - 1.1</div><div class="t" style="left:949px;top:420px;font-size:12px;color:#222">High</div><div class="t" style="left:1050px;top:420px;width:100px;text-align:right;font-size:12px;color:#222">3 %</div><div class="abs" style="left:350px;top:449px;width:13px;height:13px;border:1.3px solid #d9d9d9;border-radius:2px"></div><div class="t" style="left:472px;top:450px;font-size:12px;color:#5a5a5a">Electromagnetic interference (EMI) mitigation measures may not b…</div><div class="t" style="left:849px;top:450px;font-size:12px;color:#5a5a5a">WP - 1.1</div><div class="t" style="left:949px;top:450px;font-size:12px;color:#5a5a5a">Medium</div><div class="t" style="left:1050px;top:450px;width:100px;text-align:right;font-size:12px;color:#5a5a5a">25 %</div><div class="abs" style="left:350px;top:479px;width:13px;height:13px;border:1.3px solid #d9d9d9;border-radius:2px"></div><div class="t" style="left:472px;top:480px;font-size:12px;color:#5a5a5a">Technical challenges such as miniaturization, antenna design, and…</div><div class="t" style="left:849px;top:480px;font-size:12px;color:#5a5a5a">WP - 1.1</div><div class="t" style="left:949px;top:480px;font-size:12px;color:#5a5a5a">Very Low</div><div class="t" style="left:1050px;top:480px;width:100px;text-align:right;font-size:12px;color:#5a5a5a">37 %</div><div class="abs" style="left:350px;top:509px;width:13px;height:13px;border:1.3px solid #d9d9d9;border-radius:2px"></div><div class="t" style="left:472px;top:510px;font-size:12px;color:#5a5a5a">Insufficient expertise or experience in addressing complex technic…</div><div class="t" style="left:849px;top:510px;font-size:12px;color:#5a5a5a">WP - 1.1</div><div class="t" style="left:949px;top:510px;font-size:12px;color:#5a5a5a">Low</div><div class="t" style="left:1050px;top:510px;width:100px;text-align:right;font-size:12px;color:#5a5a5a">50 %</div><div class="abs" style="left:404px;top:531.3px;width:1000px;height:27.6px;background:#dee9fc"></div><div class="abs" style="left:404px;top:531.3px;width:5px;height:27.6px;background:#8db4f3;border-top-left-radius:3px"></div><div class="abs" style="left:447px;top:531.3px;width:1px;height:27.6px;background:#fff"></div><svg class="abs" style="left:413px;top:542px" width="10" height="7" viewBox="0 0 10 7"><path d="M1 1.2 L5 5.2 L9 1.2" fill="none" stroke="#555" stroke-width="1.5"/></svg><div class="t" style="left:455px;top:540px;font-size:12px;color:#626262">Prod set-up &amp; Pre-series</div><div class="abs" style="left:420px;top:561.3px;width:1000px;height:27.6px;background:#d5dfee"></div><div class="abs" style="left:420px;top:561.3px;width:5px;height:27.6px;background:#6f8bcb;border-top-left-radius:3px"></div><svg class="abs" style="left:429px;top:572px" width="10" height="7" viewBox="0 0 10 7"><path d="M1 1.2 L5 5.2 L9 1.2" fill="none" stroke="#555" stroke-width="1.5"/></svg><div class="t" style="left:455px;top:570px;font-size:12px;color:#626262">Serial life preparation</div><div class="abs" style="left:350px;top:599px;width:13px;height:13px;border:1.3px solid #d9d9d9;border-radius:2px"></div><div class="t" style="left:472px;top:600px;font-size:12px;color:#222">Inadequate consideration of miniaturization requirements leading …</div><div class="t" style="left:849px;top:600px;font-size:12px;color:#222">WP - 3.0</div><div class="t" style="left:949px;top:600px;font-size:12px;color:#222">Low</div><div class="t" style="left:1050px;top:600px;width:100px;text-align:right;font-size:12px;color:#222">61 %</div><div class="abs" style="left:350px;top:629px;width:13px;height:13px;border:1.3px solid #d9d9d9;border-radius:2px"></div><div class="t" style="left:472px;top:630px;font-size:12px;color:#222">Suboptimal antenna design and placement resulting in poor RF co…</div><div class="t" style="left:849px;top:630px;font-size:12px;color:#222">WP - 3.0</div><div class="t" style="left:949px;top:630px;font-size:12px;color:#222">Very Low</div><div class="t" style="left:1050px;top:630px;width:100px;text-align:right;font-size:12px;color:#222">49 %</div><div class="abs" style="left:350px;top:659px;width:13px;height:13px;border:1.3px solid #d9d9d9;border-radius:2px"></div><div class="t" style="left:472px;top:660px;font-size:12px;color:#222">Failure to effectively mitigate EMI leading to interference issues a…</div><div class="t" style="left:849px;top:660px;font-size:12px;color:#222">WP - 3.0</div><div class="t" style="left:949px;top:660px;font-size:12px;color:#222">High</div><div class="t" style="left:1050px;top:660px;width:100px;text-align:right;font-size:12px;color:#222">53 %</div><div class="abs" style="left:350px;top:689px;width:13px;height:13px;border:1.3px solid #d9d9d9;border-radius:2px"></div><div class="t" style="left:472px;top:690px;font-size:12px;color:#222">Lack of expertise in RF assembly and design leading to subpar pro…</div><div class="t" style="left:849px;top:690px;font-size:12px;color:#222">WP - 3.0</div><div class="t" style="left:949px;top:690px;font-size:12px;color:#222">Very Low</div><div class="t" style="left:1050px;top:690px;width:100px;text-align:right;font-size:12px;color:#222">26 %</div><div class="abs" style="left:350px;top:719px;width:13px;height:13px;border:1.3px solid #d9d9d9;border-radius:2px"></div><div class="t" style="left:472px;top:720px;font-size:12px;color:#5a5a5a">Delays in procurement of specialized components required for the …</div><div class="t" style="left:849px;top:720px;font-size:12px;color:#5a5a5a">WP - 3.0</div><div class="t" style="left:949px;top:720px;font-size:12px;color:#5a5a5a">Low</div><div class="t" style="left:1050px;top:720px;width:100px;text-align:right;font-size:12px;color:#5a5a5a">2 %</div><div class="abs" style="left:350px;top:749px;width:13px;height:13px;border:1.3px solid #d9d9d9;border-radius:2px"></div><div class="t" style="left:472px;top:750px;font-size:12px;color:#5a5a5a">Insufficient testing and validation of RF components leading to po…</div><div class="t" style="left:849px;top:750px;font-size:12px;color:#5a5a5a">WP - 3.0</div><div class="t" style="left:949px;top:750px;font-size:12px;color:#5a5a5a">Low</div><div class="t" style="left:1050px;top:750px;width:100px;text-align:right;font-size:12px;color:#5a5a5a">2 %</div><div class="abs" style="left:350px;top:779px;width:13px;height:13px;border:1.3px solid #d9d9d9;border-radius:2px"></div><div class="t" style="left:472px;top:780px;font-size:12px;color:#222">Changes in project scope or requirements impacting the timeline a…</div><div class="t" style="left:849px;top:780px;font-size:12px;color:#222">WP - 3.0</div><div class="t" style="left:949px;top:780px;font-size:12px;color:#222">Medium</div><div class="t" style="left:1050px;top:780px;width:100px;text-align:right;font-size:12px;color:#222">73 %</div><div class="abs" style="left:350px;top:809px;width:13px;height:13px;border:1.3px solid #d9d9d9;border-radius:2px"></div><div class="t" style="left:472px;top:810px;font-size:12px;color:#222">Inadequate resource allocation and support for the WP-3.0 activity…</div><div class="t" style="left:849px;top:810px;font-size:12px;color:#222">WP - 3.0</div><div class="t" style="left:949px;top:810px;font-size:12px;color:#222">Very High</div><div class="t" style="left:1050px;top:810px;width:100px;text-align:right;font-size:12px;color:#222">34 %</div><div class="abs" style="left:350px;top:839px;width:13px;height:13px;border:1.3px solid #d9d9d9;border-radius:2px"></div><div class="t" style="left:472px;top:840px;font-size:12px;color:#222">Unforeseen technical challenges arising during the implementatio…</div><div class="t" style="left:849px;top:840px;font-size:12px;color:#222">WP - 3.0</div><div class="t" style="left:949px;top:840px;font-size:12px;color:#222">Medium</div><div class="t" style="left:1050px;top:840px;width:100px;text-align:right;font-size:12px;color:#222">79 %</div><div class="abs" style="left:350px;top:869px;width:13px;height:13px;border:1.3px solid #d9d9d9;border-radius:2px"></div><div class="t" style="left:472px;top:870px;font-size:12px;color:#222">Inadequate documentation and communication leading to misund…</div><div class="t" style="left:849px;top:870px;font-size:12px;color:#222">WP - 3.0</div><div class="t" style="left:949px;top:870px;font-size:12px;color:#222">Low</div><div class="t" style="left:1050px;top:870px;width:100px;text-align:right;font-size:12px;color:#222">6 %</div><div class="abs" style="left:404px;top:891.3px;width:1000px;height:27.6px;background:#dee9fc"></div><div class="abs" style="left:404px;top:891.3px;width:5px;height:27.6px;background:#8db4f3;border-top-left-radius:3px"></div><div class="abs" style="left:447px;top:891.3px;width:1px;height:27.6px;background:#fff"></div><svg class="abs" style="left:413px;top:902px" width="10" height="7" viewBox="0 0 10 7"><path d="M1 1.2 L5 5.2 L9 1.2" fill="none" stroke="#555" stroke-width="1.5"/></svg><div class="t" style="left:455px;top:900px;font-size:12px;color:#626262">Launch</div><div class="abs" style="left:420px;top:921.3px;width:1000px;height:27.6px;background:#d5dfee"></div><div class="abs" style="left:420px;top:921.3px;width:5px;height:27.6px;background:#6f8bcb;border-top-left-radius:3px"></div><svg class="abs" style="left:429px;top:932px" width="10" height="7" viewBox="0 0 10 7"><path d="M1 1.2 L5 5.2 L9 1.2" fill="none" stroke="#555" stroke-width="1.5"/></svg><div class="t" style="left:455px;top:930px;font-size:12px;color:#626262">Customer PPAP Approved</div></div>
<div class="abs" style="left:1296px;top:49px;width:567px;height:902px;background:#fff;border-radius:9px;box-shadow:-5px 5px 7px -2px rgba(30,30,70,.38)"></div>
<svg class="abs" style="left:1306px;top:59px" width="50" height="50" viewBox="0 0 50 50"><circle cx="25" cy="25" r="25" fill="#ebebeb"/>
<path d="M16 7 L19 12 M34 7 L31 12" stroke="#555" stroke-width="1"/><circle cx="15.5" cy="6.5" r="1.6" fill="#f07a2a"/><circle cx="34.5" cy="6.5" r="1.6" fill="#f07a2a"/>
<path d="M23 12 C24 7 28 5 31 6 C29 8 28 10 28 13 Z" fill="#f5902f"/>
<ellipse cx="25" cy="20" rx="10" ry="8.5" fill="#f6f6f6"/>
<rect x="16.5" y="15.5" width="17" height="8" rx="4" fill="#1e1e22"/>
<circle cx="21" cy="19.5" r="2" fill="#3a3a40"/><circle cx="29" cy="19.5" r="2" fill="#3a3a40"/>
<ellipse cx="15.5" cy="20" rx="2.2" ry="4" fill="#e4662a"/><ellipse cx="34.5" cy="20" rx="1.8" ry="3.5" fill="#f08a3a"/>
<path d="M20 29 L30 29 L32 45 L18 45 Z" fill="#8a2e6c"/>
<path d="M23.5 29 L26.5 29 L27 42 L24 42 Z" fill="#f07a2a"/>
<path d="M13 25 C15 27 17 29 19 31 L17.5 34 C15 32 13 29 12 27 Z" fill="#f06a2a"/>
<rect x="14.5" y="34" width="4" height="5" rx="1" fill="#f5c542"/><rect x="31.5" y="33" width="3.5" height="5" rx="1" fill="#f5c542"/>
</svg>
<div class="abs" style="left:1368px;top:61px;width:360px;white-space:nowrap;font-size:12px;font-weight:bold;line-height:16px;color:#474747;letter-spacing:-0.34px">Hi! I'm Oscar. You can ask me questions like: <span style="color:#cf2a8e">What are my<br>meetings today?</span> or <span style="color:#cf2a8e">Give me the name and the start date of<br>my projects.</span></div>
<svg class="abs" style="left:1739.3px;top:67.8px" width="25" height="25" viewBox="0 0 24 24"><path d="M17.65 6.35C16.2 4.9 14.21 4 12 4c-4.42 0-7.99 3.58-7.99 8s3.57 8 7.99 8c3.73 0 6.84-2.55 7.73-6h-2.08c-.82 2.33-3.04 4-5.65 4-3.31 0-6-2.69-6-6s2.69-6 6-6c1.66 0 3.14.69 4.22 1.78L13 11h7V4l-2.35 2.35z" fill="#b3b3b3"/></svg>
<svg class="abs" style="left:1785px;top:70px" width="21" height="21" viewBox="0 0 24 24"><path d="M10 3 H3 V21 H21 V14" fill="none" stroke="#b3b3b3" stroke-width="2"/><path d="M14 3 H21 V10 M21 3 L11 13" fill="none" stroke="#b3b3b3" stroke-width="2"/></svg>
<svg class="abs" style="left:1829px;top:70px" width="21" height="21" viewBox="0 0 24 24"><circle cx="12" cy="12" r="10" fill="none" stroke="#b3b3b3" stroke-width="2.1"/><path d="M8 8 L16 16 M16 8 L8 16" stroke="#b3b3b3" stroke-width="2"/></svg>
<div class="abs" style="left:1296px;top:128px;width:567px;height:1px;background:#ececec"></div>
<div class="abs" style="left:0;top:136px;width:1920px;height:715px;overflow:hidden"><div class="abs" style="left:0;top:-136px;width:1920px;height:1080px"><div class="abs" style="left:1314px;top:100px;width:447px;height:61px;background:#c1c5f0;border-radius:0 0 10px 0"></div><div class="t" style="left:1366px;top:137px;font-size:12px;color:#4a4a55">anything else I can assist you with?</div><div class="abs" style="left:1646px;top:172px;width:182px;height:52px;background:#6b7ddf;border-radius:10px 10px 0 10px"></div><div class="t" style="left:1656px;top:193px;font-size:11.5px;font-weight:bold;color:#fff;letter-spacing:-0.15px">What about my risks ?</div><svg class="abs" style="left:1786px;top:183px" width="32" height="32" viewBox="0 0 40 40"><defs><clipPath id="cp1802199"><circle cx="20" cy="20" r="20"/></clipPath></defs><g clip-path="url(#cp1802199)"><rect width="40" height="40" fill="#8c7a6c"/>
<path d="M5 40 C3 30 6 14 10 8 C14 2 26 2 30 8 C35 15 37 30 35 40 Z" fill="#2b211c"/>
<ellipse cx="20.5" cy="19" rx="5.2" ry="7.2" fill="#a98468"/>
<path d="M14 14 C15 9 25 9 27 14 C24 11 17 11 14 14 Z" fill="#2b211c"/>
<path d="M11 40 C12 34 15 31 20 31 C25 31 28 34 29 40 Z" fill="#56626a"/>
<path d="M18 31 L20.5 37 L23 31 Z" fill="#dcdcdc"/></g></svg><div class="t" style="left:1314px;top:239.5px;font-size:10.5px;color:#444">16:05</div><div class="abs" style="left:1314px;top:254px;width:447px;height:582px;background:#c1c5f0;border-radius:10px 10px 10px 0"></div><svg class="abs" style="left:1325px;top:266px" width="28" height="28" viewBox="0 0 50 50"><circle cx="25" cy="25" r="25" fill="#ebebeb"/>
<path d="M16 7 L19 12 M34 7 L31 12" stroke="#555" stroke-width="1"/><circle cx="15.5" cy="6.5" r="1.6" fill="#f07a2a"/><circle cx="34.5" cy="6.5" r="1.6" fill="#f07a2a"/>
<path d="M23 12 C24 7 28 5 31 6 C29 8 28 10 28 13 Z" fill="#f5902f"/>
<ellipse cx="25" cy="20" rx="10" ry="8.5" fill="#f6f6f6"/>
<rect x="16.5" y="15.5" width="17" height="8" rx="4" fill="#1e1e22"/>
<circle cx="21" cy="19.5" r="2" fill="#3a3a40"/><circle cx="29" cy="19.5" r="2" fill="#3a3a40"/>
<ellipse cx="15.5" cy="20" rx="2.2" ry="4" fill="#e4662a"/><ellipse cx="34.5" cy="20" rx="1.8" ry="3.5" fill="#f08a3a"/>
<path d="M20 29 L30 29 L32 45 L18 45 Z" fill="#8a2e6c"/>
<path d="M23.5 29 L26.5 29 L27 42 L24 42 Z" fill="#f07a2a"/>
<path d="M13 25 C15 27 17 29 19 31 L17.5 34 C15 32 13 29 12 27 Z" fill="#f06a2a"/>
<rect x="14.5" y="34" width="4" height="5" rx="1" fill="#f5c542"/><rect x="31.5" y="33" width="3.5" height="5" rx="1" fill="#f5c542"/>
</svg>
<div style="position:absolute;left:1366px;top:274px;width:395px;font-size:12.3px;line-height:16px;color:#46464f;letter-spacing:0px">
<div>Here are some insights into the risks associated with your RF<br>Assembly project:</div>
<div style="margin-top:12px;font-weight:bold;letter-spacing:-0.47px">Current Open Risks:</div>
<ul style="margin-top:12px;padding-left:40px;list-style:disc">
<li><b style="letter-spacing:-0.47px">Inadequate consideration of miniaturization requirements:</b>
 <ul style="padding-left:40px;list-style:circle"><li><b style="letter-spacing:-0.3px">Impact:</b> Low</li><li><b style="letter-spacing:-0.3px">Probability:</b> 61%</li></ul></li>
<li><b style="letter-spacing:-0.47px">Unforeseen technical challenges:</b>
 <ul style="padding-left:40px;list-style:circle"><li><b style="letter-spacing:-0.3px">Impact:</b> Medium</li><li><b style="letter-spacing:-0.3px">Probability:</b> 79%</li></ul></li>
<li><b style="letter-spacing:-0.47px">Ineffective antenna design and placement:</b>
 <ul style="padding-left:40px;list-style:circle"><li><b style="letter-spacing:-0.3px">Impact:</b> Very Low</li><li><b style="letter-spacing:-0.3px">Probability:</b> 40%</li></ul></li>
<li><b style="letter-spacing:-0.47px">Lack of expertise in RF assembly and design:</b>
 <ul style="padding-left:40px;list-style:circle"><li><b style="letter-spacing:-0.3px">Impact:</b> Very Low</li><li><b style="letter-spacing:-0.3px">Probability:</b> 26%</li></ul></li>
</ul>
<div style="margin-top:12px;font-weight:bold;letter-spacing:-0.47px">Previously Identified and Closed Risks:</div>
<ul style="margin-top:12px;padding-left:40px;list-style:disc">
<li><b style="letter-spacing:-0.47px">Technical challenges in miniaturization:</b> <u>Closed</u></li>
<li><b style="letter-spacing:-0.47px">Delays in procurement of specialized components:</b> <u>Closed</u></li>
<li><b style="letter-spacing:-0.47px">Insufficient testing and validation leading to functionality<br>issues:</b> <u>Closed</u></li>
</ul>
<div style="margin-top:12px;font-weight:bold;letter-spacing:-0.47px">Overall Risk Management Practices:</div>
<ul style="margin-top:12px;padding-left:40px;list-style:disc">
<li>Regular assessment and updating of risk management<br>strategies</li>
<li>Continual monitoring of project scope changes to address<br>potential risks promptly</li>
</ul>
<div style="margin-top:12px">Would you like to discuss possible new risks or further modifications to<br>the existing risk list?</div>
<div style="margin-top:12px">Let me know how I can assist you further!</div>
</div><div class="abs" style="left:1844px;top:622px;width:8px;height:228px;background:#c8c8c8;border-radius:4px"></div></div></div>
<div class="abs" style="left:1305px;top:851px;width:548px;height:1px;background:#e6e6e6"></div>
<div class="abs" style="left:1316px;top:868px;width:434px;height:59px;border:1.5px solid #8088d8;background:#fff"></div>
<div class="t" style="left:1335px;top:889px;font-size:12px;color:#222">Yes please create them</div>
<div class="abs" style="left:1461px;top:886px;width:1px;height:16px;background:#222"></div>
<div class="abs" style="left:1571px;top:873px;width:21px;height:21px;border-radius:50%;border:5.5px solid #1e90f0"></div>
<svg class="abs" style="left:1766px;top:886px" width="20" height="20" viewBox="0 0 24 24"><path d="M16.5 6v11.5c0 2.21-1.79 4-4 4s-4-1.79-4-4V5c0-1.38 1.12-2.5 2.5-2.5s2.5 1.12 2.5 2.5v10.5c0 .55-.45 1-1 1s-1-.45-1-1V6H10v9.5c0 1.38 1.12 2.5 2.5 2.5s2.5-1.12 2.5-2.5V5c0-2.21-1.79-4-4-4S7 2.79 7 5v12.5c0 3.04 2.46 5.5 5.5 5.5s5.5-2.46 5.5-5.5V6h-1.5z" fill="#666"/></svg>
<svg class="abs" style="left:1810px;top:880px" width="36" height="32" viewBox="1810 880 36 32"><path d="M1818.3 888.5 L1838 896.5 L1818.3 904.5 Z" fill="none" stroke="#6f7bd6" stroke-width="2" stroke-linejoin="miter"/><path d="M1818.5 894.6 L1828 896.5 L1818.5 898.4 Z" fill="#6f7bd6"/></svg>
<div class="abs" style="left:1868px;top:68px;width:40px;height:571px;background:#fff;border-radius:20px;box-shadow:0 0 3px rgba(0,0,0,.1)"></div>
<svg class="abs" style="left:1878px;top:97px" width="22" height="22" viewBox="1878 97 22 22"><g stroke="#67658f" stroke-width="2" stroke-linecap="round"><line x1="1884" y1="99.5" x2="1884" y2="108.5"/><line x1="1884" y1="112" x2="1884" y2="116.5"/><line x1="1880.5" y1="112" x2="1887.5" y2="112"/><line x1="1894" y1="99.5" x2="1894" y2="104"/><line x1="1894" y1="107.5" x2="1894" y2="116.5"/><line x1="1890.5" y1="104" x2="1897.5" y2="104"/></g></svg>
<div class="abs" style="left:1874px;top:136px;width:28px;height:1px;background:#e2e2ea"></div>
<svg class="abs" style="left:1874.0px;top:151.5px" width="29" height="29" viewBox="0 0 24 24"><path d="M17 3H5c-1.11 0-2 .9-2 2v14c0 1.1.89 2 2 2h14c1.1 0 2-.9 2-2V7l-4-4zm-5 16c-1.66 0-3-1.34-3-3s1.34-3 3-3 3 1.34 3 3-1.34 3-3 3zm3-10H5V5h10v4z" fill="#cbbcc8"/></svg>
<svg class="abs" style="left:1876px;top:197px" width="24" height="20" viewBox="0 0 24 20"><path d="M1 2 C5 1 9 1.5 11.5 3 V19 C9 17.5 5 17 1 18 Z" fill="#5d5b8c"/><path d="M12.5 3 C15 1.5 19 1 23 2 V18 C19 17 15 17.5 12.5 19 Z" fill="none" stroke="#5d5b8c" stroke-width="1.6"/><g stroke="#5d5b8c" stroke-width="1.2"><line x1="15" y1="6" x2="21" y2="5.5"/><line x1="15" y1="9" x2="21" y2="8.5"/><line x1="15" y1="12" x2="21" y2="11.5"/></g></svg>
<svg class="abs" style="left:1877px;top:234px" width="22" height="22" viewBox="0 0 22 22"><circle cx="11" cy="3" r="2.5" fill="#5d5b8c"/><rect x="2" y="6" width="18" height="15" rx="5" fill="#5d5b8c"/><rect x="0" y="11" width="3" height="6" rx="1" fill="#5d5b8c"/><rect x="19" y="11" width="3" height="6" rx="1" fill="#5d5b8c"/><circle cx="7.5" cy="12" r="1.8" fill="#fff"/><circle cx="14.5" cy="12" r="1.8" fill="#fff"/><rect x="7" y="16" width="8" height="1.8" fill="#fff"/></svg>
<svg class="abs" style="left:1878px;top:276px" width="22" height="20" viewBox="0 0 22 20"><path d="M0 0 L22 10 L0 20 L3 10 Z" fill="#5d5b8c"/><path d="M3 10 H12" stroke="#fff" stroke-width="1"/></svg>
<svg class="abs" style="left:1877px;top:315px" width="22" height="20" viewBox="0 0 22 20"><rect x="1" y="1" width="20" height="14" rx="1.5" fill="none" stroke="#5d5b8c" stroke-width="2"/><rect x="8" y="16" width="6" height="3" fill="#5d5b8c"/><g stroke="#5d5b8c" stroke-width="1.5"><line x1="5" y1="6" x2="16" y2="6"/><line x1="6" y1="10" x2="17" y2="10"/></g></svg>
<div class="abs" style="left:1874px;top:353px;width:28px;height:1px;background:#e2e2ea"></div>
<svg class="abs" style="left:1877px;top:368px" width="24" height="24" viewBox="0 0 24 24"><rect x="6" y="2" width="17" height="15" rx="1" fill="#5d5b8c"/><path d="M3 6 V21 H19" fill="none" stroke="#5d5b8c" stroke-width="2"/><text x="14.5" y="13" font-size="7" font-family="Liberation Sans" font-weight="bold" fill="#fff" text-anchor="middle">PDF</text></svg>
<svg class="abs" style="left:1873px;top:366px" width="14" height="14" viewBox="0 0 14 14"><circle cx="7" cy="7" r="7" fill="#cfcfcf"/><path d="M4 5.5 L7 8.5 L10 5.5" fill="none" stroke="#555" stroke-width="1.4"/></svg>
<svg class="abs" style="left:1877px;top:402px" width="24" height="24" viewBox="0 0 24 24"><rect x="11" y="4" width="12" height="16" fill="none" stroke="#5d5b8c" stroke-width="1.4"/><g stroke="#5d5b8c" stroke-width="1.2"><line x1="11" y1="9" x2="23" y2="9"/><line x1="11" y1="14" x2="23" y2="14"/><line x1="17" y1="4" x2="17" y2="20"/></g><path d="M2 5 L13 3 V22 L2 20 Z" fill="#5d5b8c"/><text x="7.5" y="15.5" font-size="8" font-family="Liberation Sans" fill="#fff" text-anchor="middle">X</text></svg>
<svg class="abs" style="left:1873px;top:400px" width="14" height="14" viewBox="0 0 14 14"><circle cx="7" cy="7" r="7" fill="#cfcfcf"/><path d="M4 5.5 L7 8.5 L10 5.5" fill="none" stroke="#555" stroke-width="1.4"/></svg>
<svg class="abs" style="left:1877px;top:437px" width="24" height="24" viewBox="0 0 24 24"><rect x="11" y="4" width="12" height="16" fill="none" stroke="#5d5b8c" stroke-width="1.4"/><rect x="14" y="7" width="6" height="6" fill="#5d5b8c"/><path d="M2 5 L13 3 V22 L2 20 Z" fill="#5d5b8c"/><text x="7.5" y="15.5" font-size="8" font-family="Liberation Sans" fill="#fff" text-anchor="middle">P</text></svg>
<svg class="abs" style="left:1873px;top:435px" width="14" height="14" viewBox="0 0 14 14"><circle cx="7" cy="7" r="7" fill="#cfcfcf"/><path d="M4 5.5 L7 8.5 L10 5.5" fill="none" stroke="#555" stroke-width="1.4"/></svg>
<svg class="abs" style="left:1877px;top:471px" width="24" height="24" viewBox="0 0 24 24"><rect x="3" y="5" width="18" height="16" rx="1.5" fill="none" stroke="#5d5b8c" stroke-width="2"/><rect x="3" y="5" width="18" height="4" fill="#5d5b8c"/><line x1="17" y1="2" x2="17" y2="6" stroke="#5d5b8c" stroke-width="2"/><g fill="#5d5b8c"><circle cx="8" cy="14" r="1.2"/><circle cx="12" cy="14" r="1.2"/><circle cx="16" cy="14" r="1.2"/></g></svg>
<svg class="abs" style="left:1873px;top:469px" width="14" height="14" viewBox="0 0 14 14"><circle cx="7" cy="7" r="7" fill="#cfcfcf"/><path d="M4 5.5 L7 8.5 L10 5.5" fill="none" stroke="#555" stroke-width="1.4"/></svg>
<svg class="abs" style="left:1876px;top:506px" width="26" height="22" viewBox="0 0 26 22"><circle cx="8" cy="6" r="3.5" fill="#5d5b8c"/><circle cx="18" cy="6" r="3.5" fill="#5d5b8c"/><path d="M1 19 C1 13 5 12 8 12 C11 12 15 13 15 19 Z" fill="#5d5b8c"/><path d="M11 19 C11 13 15 12 18 12 C21 12 25 13 25 19 Z" fill="#5d5b8c"/></svg>
<svg class="abs" style="left:1877px;top:538px" width="24" height="24" viewBox="0 0 24 24"><path d="M3 11 V18 H10 M11 4 H20 V10" fill="none" stroke="#5d5b8c" stroke-width="1.8"/><circle cx="18" cy="18" r="3.2" fill="none" stroke="#5d5b8c" stroke-width="2.2"/><g stroke="#5d5b8c" stroke-width="1.6"><line x1="18" y1="13.5" x2="18" y2="22.5"/><line x1="13.5" y1="18" x2="22.5" y2="18"/><line x1="14.8" y1="14.8" x2="21.2" y2="21.2"/><line x1="21.2" y1="14.8" x2="14.8" y2="21.2"/></g><circle cx="18" cy="18" r="1.5" fill="#fff"/></svg>
<svg class="abs" style="left:1873px;top:536px" width="14" height="14" viewBox="0 0 14 14"><circle cx="7" cy="7" r="7" fill="#cfcfcf"/><path d="M7 3 L10.5 4.5 V7.5 C10.5 9.5 9 10.8 7 11.5 C5 10.8 3.5 9.5 3.5 7.5 V4.5 Z" fill="#444"/></svg>
<svg class="abs" style="left:1877px;top:572px" width="24" height="24" viewBox="0 0 24 24"><rect x="3" y="4" width="18" height="13" rx="1.5" fill="none" stroke="#5d5b8c" stroke-width="2"/><line x1="12" y1="17" x2="12" y2="21" stroke="#5d5b8c" stroke-width="2"/><line x1="7" y1="21.5" x2="17" y2="21.5" stroke="#5d5b8c" stroke-width="2"/></svg>
<svg class="abs" style="left:1873px;top:570px" width="14" height="14" viewBox="0 0 14 14"><circle cx="7" cy="7" r="7" fill="#cfcfcf"/><path d="M4 5.5 L7 8.5 L10 5.5" fill="none" stroke="#555" stroke-width="1.4"/></svg>
<div class="abs" style="left:1872px;top:917px;width:36px;height:36px;border-radius:50%;background:#6b7ddf"></div>
<svg class="abs" style="left:1880px;top:925px" width="20" height="20" viewBox="0 0 20 20"><path d="M2.5 7 V2.5 H7 M13 2.5 H17.5 V7 M17.5 13 V17.5 H13 M7 17.5 H2.5 V13" fill="none" stroke="#fff" stroke-width="1.9"/></svg>
</body></html>
